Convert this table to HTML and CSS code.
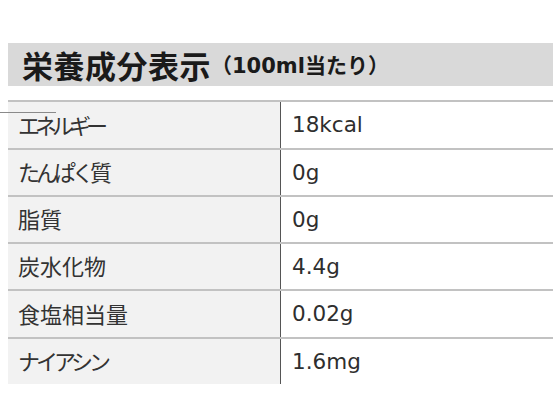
FILE: index.html
```html
<!DOCTYPE html>
<html lang="ja">
<head>
<meta charset="utf-8">
<link rel="stylesheet" href="styles.css">
</head>
<body>
<div class="page">
  <div class="heading">
    <span class="title">栄養成分表示</span><span class="sub">（100ml当たり）</span>
  </div>
  <div class="table">
    <div class="row"><div class="label kana-tight">エネルギー</div><div class="value">18kcal</div></div>
    <div class="row"><div class="label kana-mid">たんぱく質</div><div class="value">0g</div></div>
    <div class="row"><div class="label">脂質</div><div class="value">0g</div></div>
    <div class="row"><div class="label">炭水化物</div><div class="value">4.4g</div></div>
    <div class="row"><div class="label">食塩相当量</div><div class="value">0.02g</div></div>
    <div class="row"><div class="label kana-mid">ナイアシン</div><div class="value">1.6mg</div></div>
  </div>
  <div class="stray"></div>
</div>
</body>
</html>
```
FILE: styles.css
```css
html, body {
  margin: 0;
  padding: 0;
  background: #ffffff;
}
.page {
  position: relative;
  width: 560px;
  height: 420px;
  padding: 43px 7px 0 8px;
  box-sizing: border-box;
  font-family: "DejaVu Sans", "Noto Sans CJK JP", sans-serif;
}
.heading {
  height: 43px;
  background: #d9d9d9;
  display: flex;
  align-items: center;
  padding-left: 14px;
  color: #1a1a1a;
  font-weight: bold;
  white-space: nowrap;
}
.title {
  font-family: "Noto Sans CJK JP", sans-serif;
  font-size: 31px;
  letter-spacing: 0.5px;
  line-height: 1;
}
.sub {
  font-family: "DejaVu Sans", "Noto Sans CJK JP", sans-serif;
  font-size: 21px;
  line-height: 1;
  margin-top: 4px;
}
.table {
  margin-top: 14px;
  display: flex;
  flex-direction: column;
}
.row {
  display: grid;
  grid-template-columns: 273px 1fr;
  height: 47px;
  border-top: 2px solid #c2c2c2;
  box-sizing: border-box;
}
.row:nth-child(1), .row:nth-child(5) {
  height: 48px;
}
.label {
  background: #f2f2f2;
  border-right: 1px solid #555555;
  display: flex;
  align-items: center;
  padding: 0 0 3px 10px;
  font-family: "Noto Sans CJK JP", sans-serif;
  font-size: 22px;
  line-height: 1;
  color: #333333;
}
.kana-tight {
  letter-spacing: -5px;
}
.kana-mid {
  letter-spacing: -4px;
}
.value {
  display: flex;
  align-items: center;
  padding-left: 11px;
  padding-bottom: 1px;
  font-size: 21.5px;
  color: #2e2e2e;
}
.stray {
  position: absolute;
  left: 0;
  top: 112px;
  width: 56px;
  height: 1px;
  background: #8a8a8a;
}
```
